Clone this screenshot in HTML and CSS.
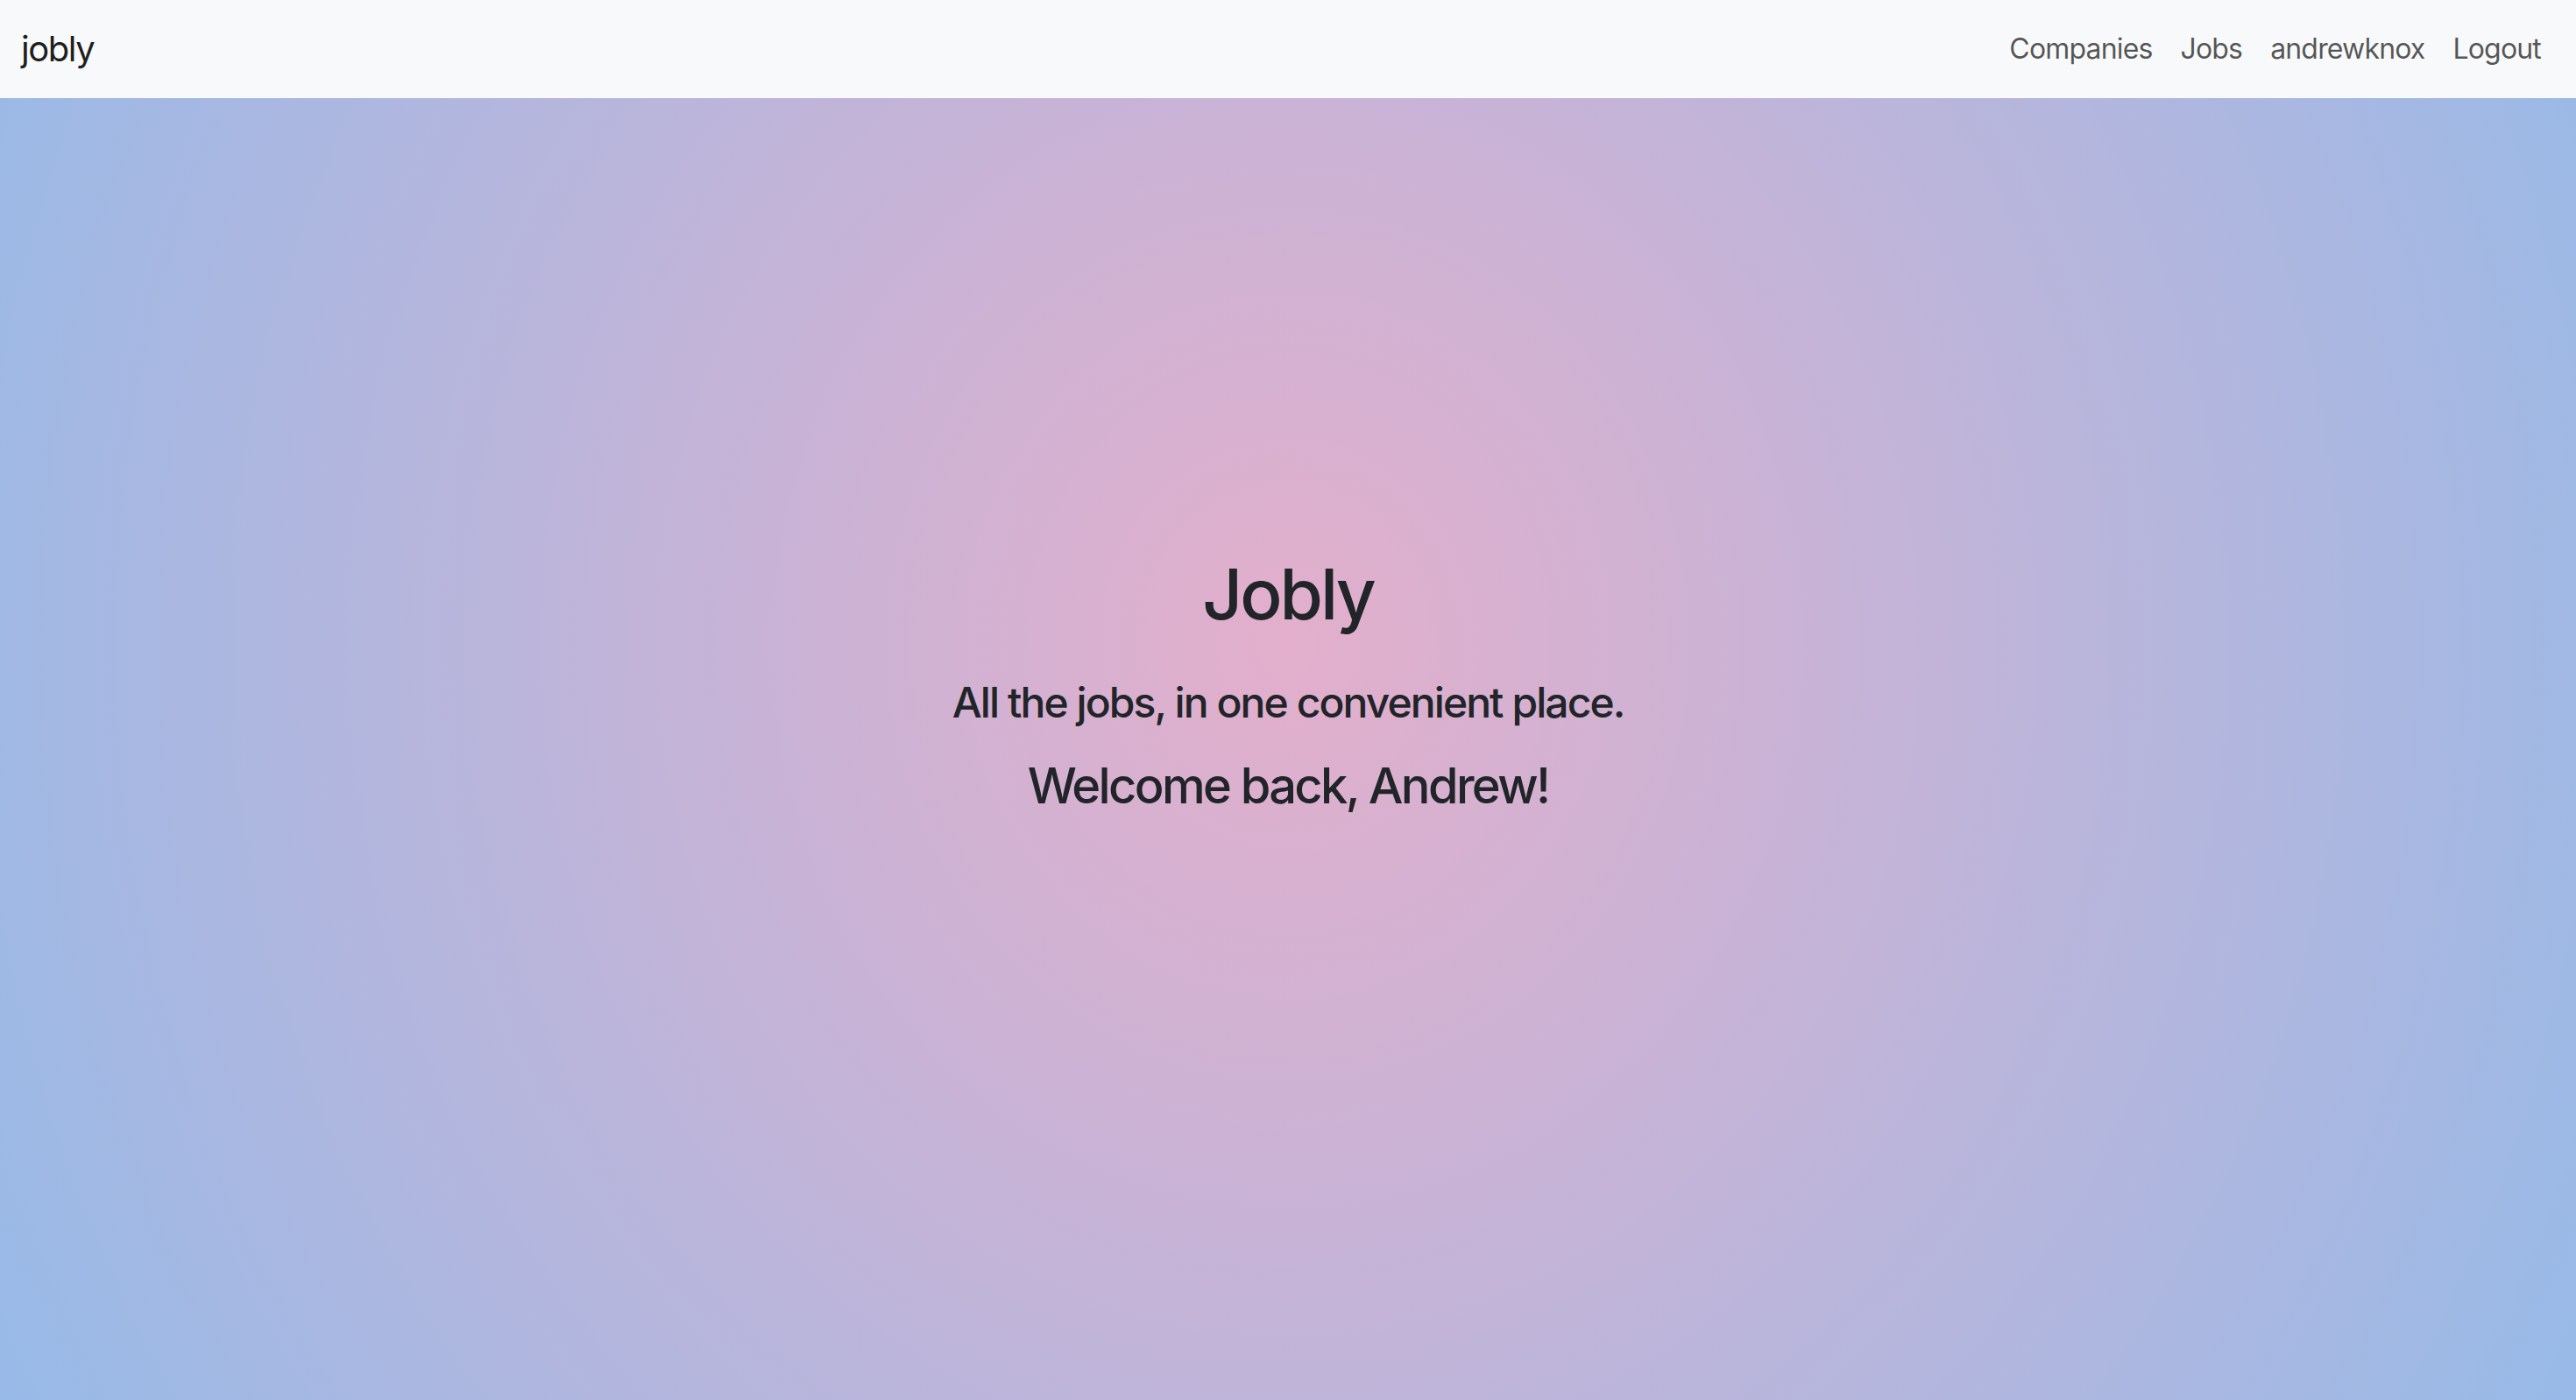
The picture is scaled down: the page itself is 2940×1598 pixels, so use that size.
FILE: index.html
```html
<!DOCTYPE html>
<html lang="en">
<head>
<meta charset="utf-8">
<title>Jobly</title>
<link rel="stylesheet" href="styles.css">
</head>
<body>
  <nav class="navbar">
    <a class="brand" href="#">jobly</a>
    <ul class="nav-links">
      <li><a class="nav-link" href="#">Companies</a></li>
      <li><a class="nav-link" href="#">Jobs</a></li>
      <li><a class="nav-link" href="#">andrewknox</a></li>
      <li><a class="nav-link" href="#">Logout</a></li>
    </ul>
  </nav>
  <main class="hero">
    <h1 class="hero-title">Jobly</h1>
    <h4 class="hero-lead">All the jobs, in one convenient place.</h4>
    <h3 class="hero-welcome">Welcome back, Andrew!</h3>
  </main>
</body>
</html>
```
FILE: styles.css
```css
* { box-sizing: border-box; }
html, body {
  margin: 0;
  padding: 0;
  height: 100%;
}
body {
  font-family: Inter, "Noto Sans", "Liberation Sans", sans-serif;
  color: #212529;
  display: flex;
  flex-direction: column;
  min-height: 100vh;
  overflow: hidden;
}
.navbar {
  height: 112px;
  flex: 0 0 112px;
  background: #f8f9fa;
  display: flex;
  align-items: center;
  justify-content: space-between;
  padding: 0 24px;
}
.brand {
  font-size: 40px;
  line-height: 60px;
  letter-spacing: -0.037em;
  color: rgba(0, 0, 0, 0.9);
  text-decoration: none;
}
.nav-links {
  list-style: none;
  margin: 0;
  padding: 0;
  display: flex;
}
.nav-link {
  display: block;
  padding: 0 16px;
  font-size: 32px;
  line-height: 48px;
  letter-spacing: -0.026em;
  color: rgba(0, 0, 0, 0.66);
  text-decoration: none;
}
.hero {
  flex: 1 1 auto;
  background: radial-gradient(ellipse 1700px 1850px at 50% 42%, #e3afcc 0%, #96bae8 100%);
  padding-top: 518px;
  text-align: center;
}
.hero h1, .hero h3, .hero h4 {
  margin: 0;
  font-weight: 500;
  line-height: 1.2;
}
.hero-title {
  font-size: 80px;
  letter-spacing: -0.037em;
  margin-bottom: 47px !important;
}
.hero-lead {
  font-size: 48px;
  letter-spacing: -0.04em;
  margin-bottom: 33px !important;
}
.hero-welcome {
  font-size: 56px;
  letter-spacing: -0.047em;
}
```
